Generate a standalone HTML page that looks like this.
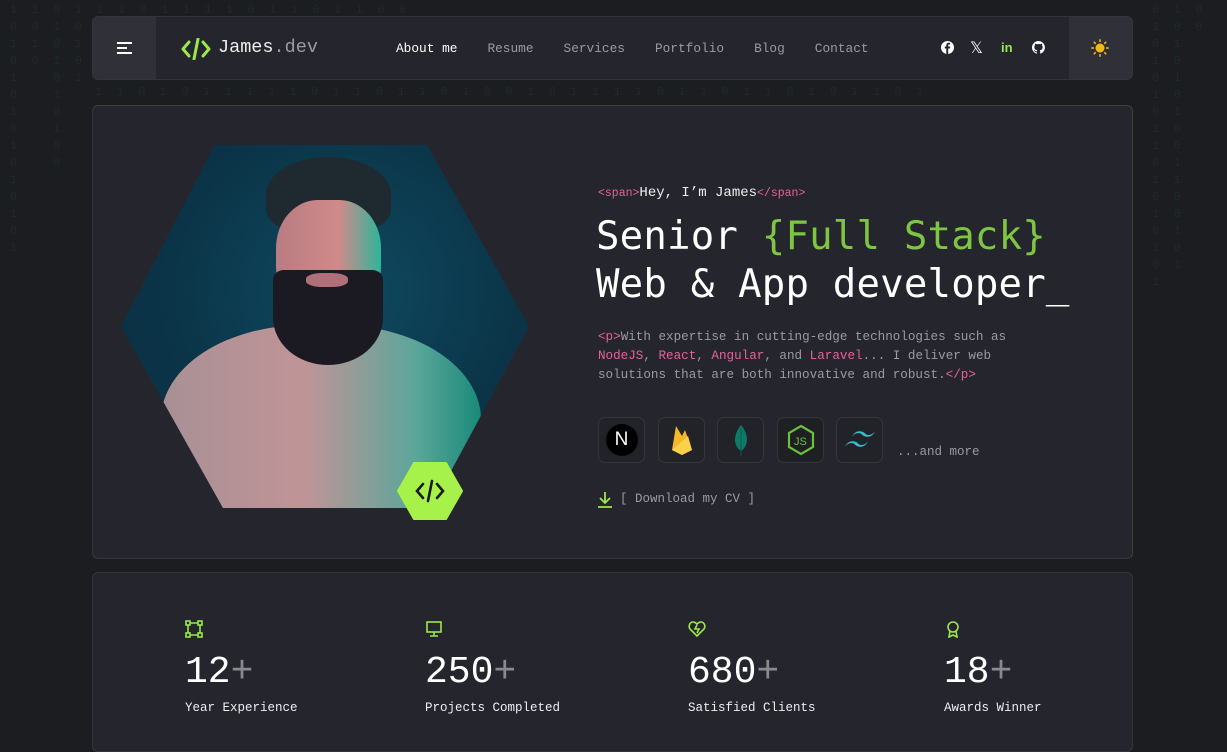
<!DOCTYPE html>
<html><head><meta charset="utf-8"><style>
*{margin:0;padding:0;box-sizing:border-box}
body{width:1227px;height:741px;overflow:hidden;background:#1c1d21;font-family:"Liberation Mono",monospace;color:#fff;position:relative}
.mx{position:absolute;color:#1f2b27;font-size:12px;line-height:17px;white-space:pre}
.card{position:absolute;left:92px;width:1041px;background:#25262d;border:1px solid #34353c;border-radius:6px}
.nav{top:16px;height:64px}
.hb{position:absolute;left:0;top:0;width:63px;height:62px;background:#2f3038;border-radius:6px 0 0 6px}
.sun{position:absolute;right:0;top:0;width:63px;height:62px;background:#2f3038;border-radius:0 6px 6px 0}
.links{position:absolute;left:303px;top:24px;font-size:12.8px;color:#9a9aa2}
.links span{margin-right:30px}
.hero{top:105px;height:454px;border-top-color:#3a4536;border-right-color:#3a4536}
.stats{top:572px;height:180px}
.pink{color:#e8609a}
.tb{position:absolute;top:311px;width:47px;height:46px;border:1px solid #34353c;border-radius:7px;background:#222329;display:flex;align-items:center;justify-content:center}
.st{position:absolute;top:50px}
.st .n{font-size:38px;line-height:44px;margin-top:8px}
.st .n b{font-weight:normal;color:#8a8a8e}
.st .l{font-size:12.5px;margin-top:6px;color:#eee}
</style></head><body>
<div class="mx" style="left:10px;top:2px">1  1  0  1  1  1  0  1  1  1  1  0  1  1  0  1  1  0  0
0  0  1  0
1  1  0  1
0  0  1  0
1     0  1
0     1
1     0
0     1
1     0
0     0
1
0
1
0
1</div>
<div class="mx" style="left:1152px;top:2px">0  1  0
1  0  0
0  1
1  0
0  1
1  0
0  1
1  0
1  0
0  1
1  1
0  0
1  0
0  1
1  0
0  1
1</div>
<div class="mx" style="left:95px;top:84px">1  1  0  1  0  1  1  1  1  1  0  1  1  0  1  1  0  1  0  0  1  0  1  1  1  1  0  1  1  0  1  1  0  1  0  1  1  0  1</div>

<div class="card nav">
 <div class="hb"><div style="position:absolute;left:24px;top:25px;width:15px;height:2px;background:#fff"></div><div style="position:absolute;left:24px;top:30px;width:10px;height:2px;background:#fff"></div><div style="position:absolute;left:24px;top:35px;width:15px;height:2px;background:#fff"></div></div>
 <svg style="position:absolute;left:88px;top:21px" width="30" height="22" viewBox="0 0 30 22"><path d="M8 4L2 11l6 7M22 4l6 7-6 7M17 1L13 21" stroke="#9be84a" stroke-width="3" fill="none" stroke-linecap="round" stroke-linejoin="round"/></svg>
 <div style="position:absolute;left:125px;top:20px;font-size:18.5px;color:#eee">James<span style="color:#9a9aa2">.dev</span></div>
 <div class="links"><span style="color:#fff">About me</span><span>Resume</span><span>Services</span><span>Portfolio</span><span>Blog</span><span>Contact</span></div>
 <svg style="position:absolute;left:848px;top:24px" width="13" height="13" viewBox="0 0 13 13"><circle cx="6.5" cy="6.5" r="6.5" fill="#fff"/><path d="M7.2 13V7.5h1.7l.3-2H7.2V4.4c0-.6.2-.9.9-.9h1V1.8H7.7C6.2 1.8 5.3 2.7 5.3 4.2v1.3H3.8v2h1.5V13z" fill="#25262d"/></svg>
 <div style="position:absolute;left:877px;top:21px;font-size:16px;color:#fff;font-family:'DejaVu Sans',sans-serif">𝕏</div>
 <div style="position:absolute;left:908px;top:23px;font-size:13px;font-weight:bold;color:#9be84a;font-family:'Liberation Sans',sans-serif">in</div>
 <svg style="position:absolute;left:939px;top:24px" width="13" height="13" viewBox="0 0 16 16"><path fill="#fff" d="M8 0a8 8 0 00-2.5 15.6c.4 0 .5-.2.5-.4v-1.5c-2.2.5-2.7-1-2.7-1-.4-.9-.9-1.2-.9-1.2-.7-.5.1-.5.1-.5.8.1 1.2.8 1.2.8.7 1.3 1.900.9 2.3.7.1-.5.3-.9.5-1.1-1.8-.2-3.6-.9-3.6-4 0-.9.3-1.6.8-2.1-.1-.2-.4-1 .1-2.1 0 0 .7-.2 2.2.8a7.6 7.6 0 014 0c1.5-1 2.2-.8 2.2-.8.4 1.1.2 1.9.1 2.1.5.6.8 1.3.8 2.1 0 3.1-1.9 3.8-3.6 4 .3.3.6.8.6 1.5v2.2c0 .2.1.5.6.4A8 8 0 008 0z"/></svg>
 <div class="sun"><svg style="position:absolute;left:22px;top:22px" width="18" height="18" viewBox="0 0 18 18"><circle cx="9" cy="9" r="4.5" fill="#f5b914"/><g stroke="#f5b914" stroke-width="1.5" stroke-linecap="round"><path d="M9 0.8v1.6M9 15.6v1.6M0.8 9h1.6M15.6 9h1.6M3.2 3.2l1.1 1.1M13.7 13.7l1.1 1.1M3.2 14.8l1.1-1.1M13.7 4.3l1.1-1.1"/></g></svg></div>
</div>

<div class="card hero">
 <div style="position:absolute;left:28px;top:39px;width:408px;height:363px;clip-path:polygon(23% 0,75% 0,100% 50%,76% 100%,25% 100%,0 50%);background:radial-gradient(ellipse at 55% 40%,#0f4a60 0%,#0b3448 55%,#0a2c3e 100%);overflow:hidden">
  <div style="position:absolute;left:40px;top:180px;width:320px;height:210px;border-radius:45% 45% 0 0;background:linear-gradient(90deg,#a89095 0%,#c09497 45%,#5aa69a 80%,#1a8a78 100%)"></div>
  <div style="position:absolute;left:145px;top:12px;width:125px;height:75px;border-radius:50% 50% 30% 30%;background:#1e2a30"></div>
  <div style="position:absolute;left:155px;top:55px;width:105px;height:120px;border-radius:40% 40% 45% 45%;background:linear-gradient(90deg,#b87c82,#d08a8a 60%,#2eb59a)"></div>
  <div style="position:absolute;left:152px;top:125px;width:110px;height:95px;border-radius:10% 10% 50% 50%;background:#1b1a22"></div>
  <div style="position:absolute;left:185px;top:128px;width:42px;height:14px;border-radius:40%;background:#b0707a"></div>
 </div>
 <svg style="position:absolute;left:304px;top:356px" width="66" height="58" viewBox="0 0 66 58"><path d="M17 1h32l16 28-16 28H17L1 29z" fill="#a6f24a" stroke="#a6f24a" stroke-linejoin="round" stroke-width="2"/><path d="M26 22l-6 7 6 7M40 22l6 7-6 7M35 19l-4 20" stroke="#1a1a1a" stroke-width="2.6" fill="none" stroke-linecap="round"/></svg>

 <div style="position:absolute;left:505px;top:79px;font-size:14px;color:#eee"><span class="pink" style="font-size:11.5px">&lt;span&gt;</span>Hey, I’m James<span class="pink" style="font-size:11.5px">&lt;/span&gt;</span></div>
 <div style="position:absolute;left:503px;top:107px;font-size:39px;line-height:48px;color:#fff;letter-spacing:0.2px;font-family:'DejaVu Sans Mono','Liberation Mono',monospace">Senior <span style="color:#7ec542">{Full Stack}</span><br>Web &amp; App developer_</div>
 <div style="position:absolute;left:505px;top:222px;font-size:12.6px;line-height:19px;color:#9a9aa2;width:440px"><span class="pink">&lt;p&gt;</span>With expertise in cutting-edge technologies such as <span class="pink">NodeJS</span>, <span class="pink">React</span>, <span class="pink">Angular</span>, and <span class="pink">Laravel</span>... I deliver web solutions that are both innovative and robust.<span class="pink">&lt;/p&gt;</span></div>
 <div class="tb" style="left:505px"><div style="width:32px;height:32px;border-radius:50%;background:#000;color:#fff;font-family:'Liberation Sans',sans-serif;font-size:19px;line-height:32px;text-align:center">N</div></div>
 <div class="tb" style="left:565px"><svg width="24" height="32" viewBox="0 0 24 32"><path d="M2 26L6 2l6 10 3-6 7 20-10 5z" fill="#f8b62a"/><path d="M2 26l10 5 10-5-4-14z" fill="#fbd14a"/></svg></div>
 <div class="tb" style="left:624px"><svg width="14" height="32" viewBox="0 0 14 32"><path d="M7 1C3 6 1 11 1 16s3 9 6 11c3-2 6-6 6-11S11 6 7 1z" fill="#0e7a6a"/><path d="M7 4v28" stroke="#0a5a4c" stroke-width="1"/></svg></div>
 <div class="tb" style="left:684px;background:#1f2024"><svg width="30" height="32" viewBox="0 0 30 32"><path d="M15 2l12 7v14l-12 7-12-7V9z" fill="none" stroke="#6bbf3a" stroke-width="2.2"/><text x="8" y="21" font-size="11" fill="#6bbf3a" font-family="Liberation Sans">JS</text></svg></div>
 <div class="tb" style="left:743px"><svg width="34" height="22" viewBox="0 0 34 22"><path d="M9 8c2-5 6-7 11-5 2 1 3 3 5 3 3 0 5-1 7-4-2 5-6 7-11 5-2-1-3-3-5-3-3 0-5 1-7 4zM2 18c2-5 6-7 11-5 2 1 3 3 5 3 3 0 5-1 7-4-2 5-6 7-11 5-2-1-3-3-5-3-3 0-5 1-7 4z" fill="#38bdcf"/></svg></div>
 <div style="position:absolute;left:804px;top:339px;font-size:12.5px;color:#9a9aa2">...and more</div>
 <svg style="position:absolute;left:504px;top:385px" width="16" height="18" viewBox="0 0 16 18"><path d="M8 1v11M3 7l5 5 5-5M1 16h14" stroke="#9be84a" stroke-width="1.8" fill="none"/></svg>
 <div style="position:absolute;left:527px;top:386px;font-size:12.5px;color:#9a9aa2">[ Download my CV ]</div>
</div>

<div class="card stats">
 <div class="st" style="left:92px"><svg width="18" height="18" viewBox="0 0 18 18" style="margin-top:-3px"><g fill="none" stroke="#9be84a" stroke-width="1.6"><rect x="1" y="1" width="4" height="4"/><rect x="13" y="1" width="4" height="4"/><rect x="1" y="13" width="4" height="4"/><rect x="13" y="13" width="4" height="4"/><path d="M5 3h8M5 15h8M3 5v8M15 5v8"/></g></svg><div class="n">12<b>+</b></div><div class="l">Year Experience</div></div>
 <div class="st" style="left:332px"><svg width="18" height="18" viewBox="0 0 18 18" style="margin-top:-3px"><g fill="none" stroke="#9be84a" stroke-width="1.6"><rect x="2" y="2" width="14" height="10"/><path d="M9 12v4M5 16h8"/></g></svg><div class="n">250<b>+</b></div><div class="l">Projects Completed</div></div>
 <div class="st" style="left:595px"><svg width="18" height="18" viewBox="0 0 18 18" style="margin-top:-3px"><path d="M9 16L2 9C0 6 2 2 5 2c2 0 3 1 4 2 1-1 2-2 4-2 3 0 5 4 3 7zM9 5L7 9h4l-2 4" fill="none" stroke="#9be84a" stroke-width="1.6"/></svg><div class="n">680<b>+</b></div><div class="l">Satisfied Clients</div></div>
 <div class="st" style="left:851px"><svg width="18" height="18" viewBox="0 0 18 18" style="margin-top:-3px"><g fill="none" stroke="#9be84a" stroke-width="1.6"><circle cx="9" cy="7" r="5"/><path d="M6 11l-1 6 4-2 4 2-1-6"/></g></svg><div class="n">18<b>+</b></div><div class="l">Awards Winner</div></div>
</div>
</body></html>
